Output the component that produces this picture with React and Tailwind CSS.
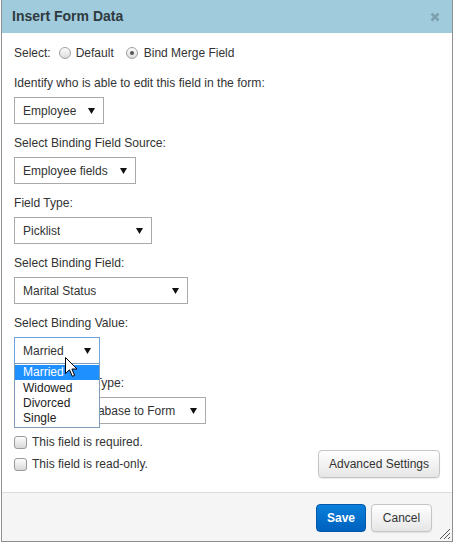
import React from "react";

function Arrow() {
  return (
    <svg width="7" height="6" viewBox="0 0 7 6" className="shrink-0">
      <polygon points="0,0 7,0 3.5,6" fill="#111" />
    </svg>
  );
}

function Select({ w, children, focus }) {
  return (
    <div
      className={`flex items-center justify-between h-[27px] pl-[8px] pr-[8px] bg-white border ${
        focus ? "border-[#6fa3df]" : "border-[#a9a9a9]"
      } text-[12px] text-[#333] ${w}`}
    >
      <span className="whitespace-nowrap overflow-hidden">{children}</span>
      <Arrow />
    </div>
  );
}

function Label({ children, className = "" }) {
  return (
    <div className={`h-[16px] leading-[16px] text-[12.1px] text-[#333] ${className}`}>
      {children}
    </div>
  );
}

function Radio({ checked }) {
  return (
    <span className="w-[12px] h-[12px] rounded-full border border-[#a0a0a0] bg-gradient-to-b from-[#fdfdfd] to-[#dcdcdc] flex items-center justify-center shrink-0">
      {checked && <span className="w-[4px] h-[4px] rounded-full bg-[#555]" />}
    </span>
  );
}

function Checkbox() {
  return (
    <span className="w-[13px] h-[13px] rounded-[3px] border border-[#9a9a9a] bg-gradient-to-b from-[#fdfdfd] to-[#d8d8d8] shrink-0" />
  );
}

function Btn({ children, className = "" }) {
  return (
    <div
      className={`h-[28px] flex items-center justify-center rounded-[4px] border border-[#c5c5c5] bg-gradient-to-b from-[#ffffff] to-[#e6e6e6] text-[12px] text-[#333] shadow-[0_1px_1px_rgba(0,0,0,0.08)] ${className}`}
    >
      {children}
    </div>
  );
}

export default function App() {
  return (
    <div className="w-[453px] h-[543px] bg-white font-['Liberation_Sans',Arial,sans-serif]">
      <div className="relative ml-[1px] w-[452px] h-[542px] border-x border-b border-[#8f8f8f] bg-white flex flex-col">
        {/* header */}
        <div className="h-[33px] bg-[#9fcbdc] flex items-center justify-between pl-[10px] pr-[12px] shrink-0">
          <span className="text-[14px] font-bold text-[#2f3a40]">Insert Form Data</span>
          <svg width="10" height="10" viewBox="0 0 10 10">
            <path d="M1.5 1.5 L8.5 8.5 M8.5 1.5 L1.5 8.5" stroke="#7e9fad" strokeWidth="2.6" />
          </svg>
        </div>

        {/* body */}
        <div className="flex-1 px-[12px] pt-[12px]">
          <div className="flex items-center h-[16px] text-[12px] text-[#333]">
            <span>Select:</span>
            <span className="ml-[8px]"><Radio /></span>
            <span className="ml-[5px]">Default</span>
            <span className="ml-[12px]"><Radio checked /></span>
            <span className="ml-[6px]">Bind Merge Field</span>
          </div>

          <Label className="mt-[14px]">Identify who is able to edit this field in the form:</Label>
          <div className="mt-[6px]"><Select w="w-[90px]">Employee</Select></div>

          <Label className="mt-[11px]">Select Binding Field Source:</Label>
          <div className="mt-[6px]"><Select w="w-[122px]">Employee fields</Select></div>

          <Label className="mt-[11px]">Field Type:</Label>
          <div className="mt-[6px]"><Select w="w-[138px]">Picklist</Select></div>

          <Label className="mt-[11px]">Select Binding Field:</Label>
          <div className="mt-[6px]"><Select w="w-[174px]">Marital Status</Select></div>

          <Label className="mt-[11px]">Select Binding Value:</Label>
          <div className="mt-[6px] relative w-[86px] z-10">
            <Select w="w-[86px]" focus>Married</Select>
            <div className="absolute left-0 top-[26px] w-[86px] border border-[#7f9db9] bg-white text-[12px] text-[#222] py-[1px]">
              <div className="h-[15px] leading-[15px] pl-[8px] bg-[#1e90ff] text-white">Married</div>
              <div className="h-[16px] leading-[16px] pl-[8px]">Widowed</div>
              <div className="h-[15px] leading-[15px] pl-[8px]">Divorced</div>
              <div className="h-[15px] leading-[15px] pl-[8px]">Single</div>
            </div>
          </div>

          <Label className="mt-[11px]">Select Binding Type:</Label>
          <div className="mt-[6px]"><Select w="w-[192px]">One Way: Database to Form</Select></div>

          <div className="mt-[11px] flex justify-between items-start">
            <div className="flex flex-col gap-[8px]">
              <div className="flex items-center h-[14px] gap-[5px] text-[12px] text-[#333]">
                <Checkbox />
                <span>This field is required.</span>
              </div>
              <div className="flex items-center h-[14px] gap-[5px] text-[12px] text-[#333]">
                <Checkbox />
                <span>This field is read-only.</span>
              </div>
            </div>
            <Btn className="mt-[15px] w-[122px]">Advanced Settings</Btn>
          </div>
        </div>

        {/* footer */}
        <div className="h-[49px] shrink-0 border-t border-[#dcdcdc] bg-[#f5f5f5] flex justify-end items-start pt-[11px] pr-[20px] gap-[5px]">
          <div className="h-[28px] w-[50px] flex items-center justify-center rounded-[4px] border border-[#0158a8] bg-gradient-to-b from-[#0a7fdb] to-[#0061be] text-white font-bold text-[12px]">
            Save
          </div>
          <Btn className="w-[61px]">Cancel</Btn>
        </div>

        {/* resize grip */}
        <svg className="absolute right-[1px] bottom-[1px]" width="12" height="12" viewBox="0 0 12 12">
          <path d="M11 1 L1 11 M11 5 L5 11 M11 9 L9 11" stroke="#555" strokeWidth="1" />
        </svg>

        {/* cursor */}
        <svg className="absolute left-[63px] top-[357px] z-20" width="13" height="21" viewBox="0 0 13 21">
          <path d="M0.5 0.5 L0.5 16.5 L4.5 12.8 L7.3 19.3 L9.6 18.3 L6.9 12 L12 12 Z" fill="#fff" stroke="#000" strokeWidth="1" strokeLinejoin="round" />
        </svg>
      </div>
    </div>
  );
}
